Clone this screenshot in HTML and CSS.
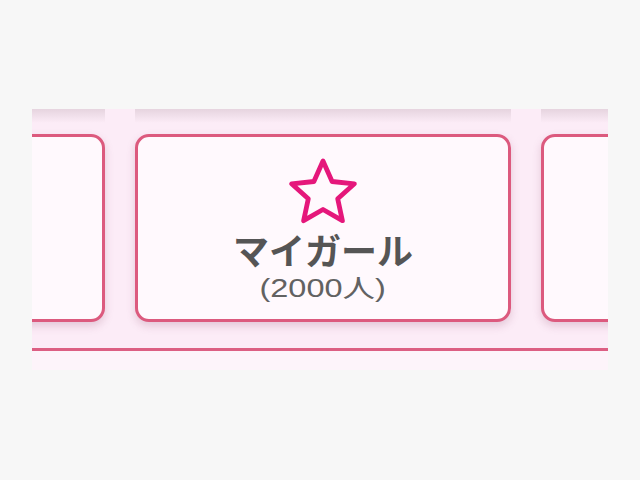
FILE: index.html
```html
<!DOCTYPE html>
<html>
	<head>
	<meta charset="utf-8">
	<link rel="stylesheet" href="styles.css">
	</head>

	<body>
		<div class="panel">

			<!-- shadows of the row above, cut off by the panel -->
			<div class="shade-row">
				<div class="shade"></div>
				<div class="shade"></div>
				<div class="shade"></div>
			</div>

			<div class="card-row">
				<div class="card"></div>

				<div class="card">
					<svg class="star" width="72" height="68" viewBox="0 0 72 68">
						<polygon points="36,4 45.1,24.5 67.4,26.8 50.7,41.8 55.4,63.7 36,52.5 16.6,63.7 21.3,41.8 4.6,26.8 26.9,24.5"
							fill="none" stroke="#e5177b" stroke-width="4.8" stroke-linejoin="round"/>
					</svg>
					<p class="title">マイガール</p>
					<p class="count">(2000人)</p>
				</div>

				<div class="card"></div>
			</div>

			<div class="rule"></div>
			<div class="foot"></div>

		</div>
	</body>
</html>
```

FILE: styles.css
```css
body {
	margin: 0;
	padding: 109px 32px 0;
	background: #f7f7f7;
}

.panel {
	width: 576px;
	height: 261px;
	overflow: hidden;
	background: #fcecf7;
}

.shade-row {
	display: flex;
	justify-content: center;
	gap: 30px;
	padding-left: 6px;
	height: 14px;
}

.shade {
	flex: 0 0 376px;
	background: linear-gradient(#e6d4df, rgba(252, 236, 247, 0));
}

.card-row {
	display: flex;
	justify-content: center;
	gap: 30px;
	padding-left: 6px;
	margin-top: 11px;
}

.card {
	flex: 0 0 376px;
	height: 188px;
	box-sizing: border-box;
	border: 3px solid #dc5a7e;
	border-radius: 14px;
	background: #fff9fd;
	box-shadow: 0 4px 9px rgba(140, 70, 105, 0.22);
	display: flex;
	flex-direction: column;
	align-items: center;
	padding-top: 20px;
}

.star {
	display: block;
}

p {
	margin: 0;
	padding: 0;
	color: #555;
	font-family: "Liberation Sans", "Noto Sans CJK JP", sans-serif;
	-webkit-font-smoothing: antialiased;
}

.title {
	font-family: "Noto Sans CJK JP", sans-serif;
	font-weight: 700;
	font-size: 36px;
	line-height: 40px;
	margin-top: 4px;
}

.count {
	font-size: 25px;
	line-height: 28px;
	margin-top: 5px;
	color: #626262;
	transform: scaleX(1.3);
}

.rule {
	height: 3px;
	margin-top: 26px;
	background: #dc5f83;
}

.foot {
	height: 19px;
	background: #fdf4fa;
}
```
